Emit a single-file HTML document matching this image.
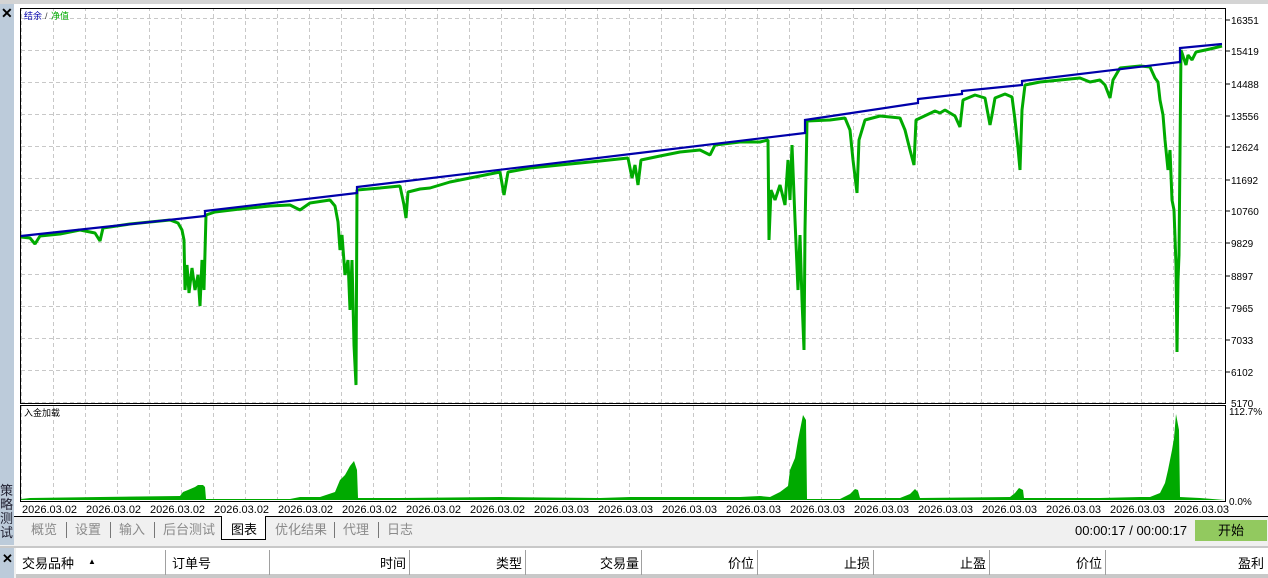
<!DOCTYPE html>
<html><head><meta charset="utf-8"><style>
body{margin:0;width:1268px;height:578px;overflow:hidden;background:#f0f0f0;font-family:"Liberation Sans","Noto Sans CJK SC",sans-serif;position:relative}
.abs{position:absolute}
.tab{position:absolute;top:519px;font-size:13px;color:#8a8a8a}
.sep{position:absolute;top:522px;width:1px;height:16px;background:#777}
.hd{position:absolute;top:553px;font-size:13px;color:#000}
.hs{position:absolute;top:550px;width:1px;height:25px;background:#a0a0a0}
</style></head><body>
<div class="abs" style="left:0;top:0;width:1268px;height:4px;background:#d4d4d4;border-bottom:1px solid #b0b0b0"></div>
<div class="abs" style="left:0;top:4px;width:14px;height:541px;background:#bccbda"></div>
<div class="abs" style="left:1px;top:5px;font-size:14px;font-weight:bold">✕</div>
<div class="abs" style="left:0;top:484px;width:14px;font-size:13px;line-height:14px;color:#223">策<br>略<br>测<br>试</div>
<div class="abs" style="left:14px;top:4px;width:1254px;height:512px;background:#fff"></div>
<svg class="abs" style="left:0;top:0" width="1268" height="516">
<defs>
<pattern id="gv" x="21" y="0" width="32" height="1000" patternUnits="userSpaceOnUse"><line x1="0.5" y1="0" x2="0.5" y2="1000" stroke="#c8c8c8" stroke-dasharray="4,3"/></pattern>
<pattern id="gh" x="0" y="18" width="2000" height="32" patternUnits="userSpaceOnUse"><line x1="0" y1="0.5" x2="2000" y2="0.5" stroke="#c8c8c8" stroke-dasharray="4,3"/></pattern>
</defs>
<rect x="21" y="9" width="1204" height="394" fill="url(#gv)"/>
<rect x="21" y="9" width="1204" height="394" fill="url(#gh)"/>
<rect x="21" y="406" width="1204" height="94" fill="url(#gv)"/>
<rect x="20.5" y="8.5" width="1205" height="395" fill="none" stroke="#000"/>
<rect x="20.5" y="405.5" width="1205" height="96" fill="none" stroke="#000"/>
<g stroke="#000"><line x1="1226" y1="20" x2="1230" y2="20"/><line x1="1226" y1="51" x2="1230" y2="51"/><line x1="1226" y1="84" x2="1230" y2="84"/><line x1="1226" y1="116" x2="1230" y2="116"/><line x1="1226" y1="147" x2="1230" y2="147"/><line x1="1226" y1="180" x2="1230" y2="180"/><line x1="1226" y1="211" x2="1230" y2="211"/><line x1="1226" y1="243" x2="1230" y2="243"/><line x1="1226" y1="276" x2="1230" y2="276"/><line x1="1226" y1="308" x2="1230" y2="308"/><line x1="1226" y1="340" x2="1230" y2="340"/><line x1="1226" y1="372" x2="1230" y2="372"/></g>
<polyline fill="none" stroke="#00aa00" stroke-width="3" stroke-linejoin="bevel" points="21,237 30,238 35,244 40,236 60,234 80,230 95,233 100,241 103,228 130,224 150,222 170,220 178,223 182,230 184,240 185,290 187,265 189,293 192,268 195,290 198,275 200,306 202,260 204,290 206,215 215,212 240,209 270,206 290,205 300,210 310,203 330,200 335,206 338,222 340,250 342,235 345,275 348,260 350,310 352,260 354,345 356,385 357,190 380,188 400,186 404,205 406,218 408,192 420,189 430,188 450,182 480,176 500,172 504,195 508,172 530,168 560,165 600,161 628,158 632,178 635,165 638,185 641,160 660,156 680,152 700,150 710,155 715,145 740,142 760,142 768,140 769,240 771,190 775,200 780,185 785,205 788,160 790,200 792,145 795,220 798,290 800,235 802,300 804,350 805,230 807,121 830,120 845,118 850,130 853,160 857,193 859,140 865,120 880,116 900,118 905,130 910,150 914,165 916,120 935,111 940,113 945,110 955,116 960,127 963,100 975,95 985,98 990,125 992,115 995,98 1005,94 1012,97 1015,120 1018,148 1020,170 1022,110 1025,85 1040,82 1060,80 1080,78 1090,82 1100,80 1105,85 1110,98 1113,80 1120,68 1140,66 1150,67 1155,78 1158,82 1160,100 1163,115 1165,140 1168,170 1170,150 1172,200 1174,210 1176,265 1177,352 1178,280 1179,255 1181,50 1186,65 1188,55 1192,60 1196,52 1210,49 1222,46"/>
<polyline fill="none" stroke="#0000aa" stroke-width="2.2" points="21,236 205,216 205,211 357,193 357,187 805,133 805,120 918,103 918,99 962,94 962,91 1022,85 1022,81 1180,62 1180,48 1222,44"/>
<polygon fill="#00aa00" points="21,500 21,499 30,498 100,497 180,496 183,492 188,490 195,487 198,485 203,485 205,487 206,499 290,499 300,497 320,497 335,492 340,480 345,475 350,466 354,461 357,470 358,498 400,498 500,497 600,498 630,497 700,497 740,497 760,496 770,497 780,492 788,486 790,470 795,458 798,440 800,430 803,415 806,420 807,499 840,499 850,494 855,489 858,490 860,498 900,498 910,494 915,489 918,492 920,498 1010,497 1015,493 1019,488 1023,490 1024,498 1100,498 1140,497 1150,497 1160,493 1165,483 1168,470 1172,450 1174,438 1176,414 1179,430 1180,497 1200,498 1225,500"/>
<text x="24" y="19" font-size="9" fill="#0000aa" font-family="Liberation Sans,Noto Sans CJK SC,sans-serif">结余</text>
<text x="45" y="19" font-size="9" fill="#444">/</text>
<text x="51" y="19" font-size="9" fill="#00aa00" font-family="Liberation Sans,Noto Sans CJK SC,sans-serif">净值</text>
<text x="24" y="416" font-size="9" fill="#000" font-family="Liberation Sans,Noto Sans CJK SC,sans-serif">入金加载</text>
<g font-size="10" fill="#000" font-family="Liberation Sans,sans-serif">
<text x="1231" y="24">16351</text><text x="1231" y="55">15419</text><text x="1231" y="88">14488</text><text x="1231" y="120">13556</text><text x="1231" y="151">12624</text><text x="1231" y="184">11692</text><text x="1231" y="215">10760</text><text x="1231" y="247">9829</text><text x="1231" y="280">8897</text><text x="1231" y="312">7965</text><text x="1231" y="344">7033</text><text x="1231" y="376">6102</text><text x="1231" y="407">5170</text>
<text x="1229" y="415">112.7%</text><text x="1229" y="505">0.0%</text>
</g>
<g font-size="11" fill="#000" font-family="Liberation Sans,sans-serif">
<text x="22" y="513">2026.03.02</text><text x="86" y="513">2026.03.02</text><text x="150" y="513">2026.03.02</text><text x="214" y="513">2026.03.02</text><text x="278" y="513">2026.03.02</text><text x="342" y="513">2026.03.02</text><text x="406" y="513">2026.03.02</text><text x="470" y="513">2026.03.02</text><text x="534" y="513">2026.03.03</text><text x="598" y="513">2026.03.03</text><text x="662" y="513">2026.03.03</text><text x="726" y="513">2026.03.03</text><text x="790" y="513">2026.03.03</text><text x="854" y="513">2026.03.03</text><text x="918" y="513">2026.03.03</text><text x="982" y="513">2026.03.03</text><text x="1046" y="513">2026.03.03</text><text x="1110" y="513">2026.03.03</text><text x="1174" y="513">2026.03.03</text>
</g>
</svg>
<div class="abs" style="left:14px;top:516px;width:1254px;height:1px;background:#000"></div>
<div class="tab" style="left:31px">概览</div><div class="sep" style="left:66px"></div>
<div class="tab" style="left:75px">设置</div><div class="sep" style="left:110px"></div>
<div class="tab" style="left:119px">输入</div><div class="sep" style="left:154px"></div>
<div class="tab" style="left:163px">后台测试</div>
<div class="abs" style="left:221px;top:516px;width:43px;height:23px;background:#fff;border:1px solid #000;border-top:none"></div>
<div class="tab" style="left:231px;color:#000">图表</div>
<div class="tab" style="left:275px">优化结果</div><div class="sep" style="left:334px"></div>
<div class="tab" style="left:343px">代理</div><div class="sep" style="left:378px"></div>
<div class="tab" style="left:387px">日志</div>
<div class="abs" style="left:1075px;top:523px;font-size:13px;color:#000;font-family:'Liberation Sans',sans-serif">00:00:17 / 00:00:17</div>
<div class="abs" style="left:1195px;top:520px;width:72px;height:21px;background:#92c95f;font-size:13px;text-align:center;line-height:21px">开始</div>
<div class="abs" style="left:0;top:546px;width:1268px;height:2px;background:#c8c8c8"></div>
<div class="abs" style="left:0;top:548px;width:14px;height:30px;background:#bccbda"></div>
<div class="abs" style="left:2px;top:551px;font-size:13px;font-weight:bold">✕</div>
<div class="abs" style="left:16px;top:548px;width:1252px;height:27px;background:#fff"></div>
<div class="abs" style="left:16px;top:574px;width:1252px;height:4px;background:#c8c8c8"></div>
<div class="hd" style="left:22px">交易品种</div><div class="hd" style="left:88px;font-size:8px;top:557px">▲</div>
<div class="hs" style="left:165px"></div><div class="hd" style="left:172px">订单号</div>
<div class="hs" style="left:269px"></div><div class="hd" style="left:380px">时间</div>
<div class="hs" style="left:409px"></div><div class="hd" style="left:496px">类型</div>
<div class="hs" style="left:525px"></div><div class="hd" style="left:600px">交易量</div>
<div class="hs" style="left:641px"></div><div class="hd" style="left:728px">价位</div>
<div class="hs" style="left:757px"></div><div class="hd" style="left:844px">止损</div>
<div class="hs" style="left:873px"></div><div class="hd" style="left:960px">止盈</div>
<div class="hs" style="left:989px"></div><div class="hd" style="left:1076px">价位</div>
<div class="hs" style="left:1105px"></div><div class="hd" style="left:1238px">盈利</div>
</body></html>
